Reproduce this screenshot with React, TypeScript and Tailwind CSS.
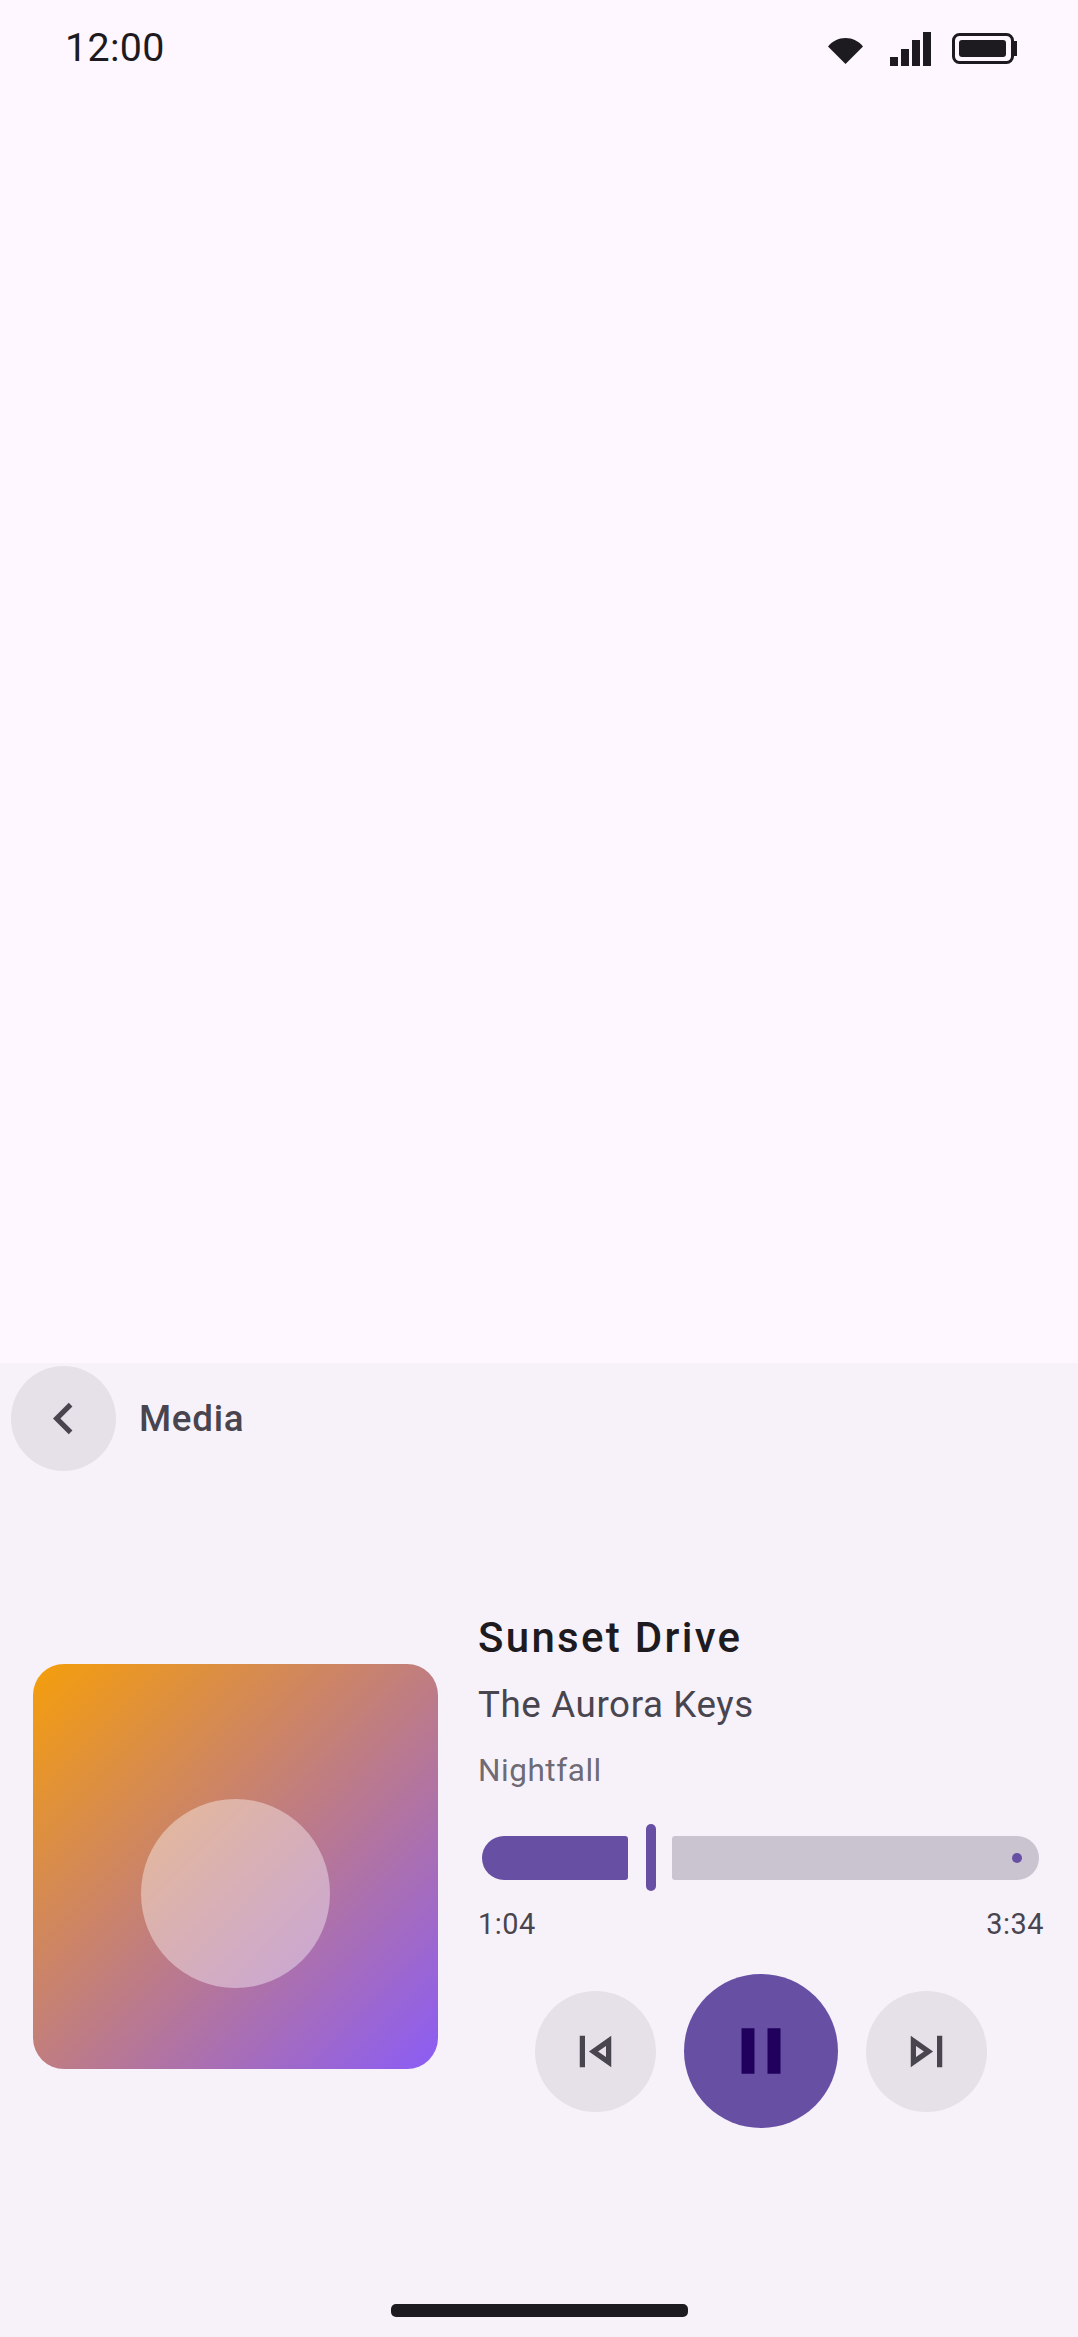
function StatusBar() {
  return (
    <div className="flex items-center justify-between pl-[65px] pr-[61px] pt-[28px]">
      <span className="text-[39.4px] leading-[40px] tracking-[0.3px] text-[#1d1b20]">12:00</span>
      <div className="flex items-center pt-[1px]">
        {/* wifi */}
        <svg width="35" height="26" viewBox="0 0 35 26" className="mt-[5px]">
          <path d="M0 8.5C4.5 3 10.5 0 17.5 0S30.5 3 35 8.5L17.5 26z" fill="#1d1b20" />
        </svg>
        {/* signal */}
        <svg width="41" height="34" viewBox="0 0 41 34" className="ml-[27px]">
          <rect x="0" y="25" width="8" height="9" fill="#1d1b20" />
          <rect x="11" y="17" width="8" height="17" fill="#1d1b20" />
          <rect x="22" y="8" width="8" height="26" fill="#1d1b20" />
          <rect x="33" y="0" width="8" height="34" fill="#1d1b20" />
        </svg>
        {/* battery */}
        <svg width="65" height="31" viewBox="0 0 65 31" className="ml-[21px]">
          <rect x="1.5" y="1.5" width="59" height="28" rx="6" fill="none" stroke="#1d1b20" strokeWidth="3" />
          <rect x="7" y="7" width="47" height="17" rx="3" fill="#1d1b20" />
          <rect x="62" y="8" width="3" height="15" fill="#1d1b20" />
        </svg>
      </div>
    </div>
  );
}

function SeekBar() {
  return (
    <div className="flex items-center h-[67px] pl-[4px] pr-[5px]">
      <div className="w-[146px] h-[44px] bg-[#6750a4] rounded-l-[22px] rounded-r-[3px]" />
      <div className="w-[10px] h-[67px] ml-[18px] bg-[#6750a4] rounded-full" />
      <div className="flex-1 flex items-center justify-end h-[44px] ml-[16px] pr-[17px] bg-[#cac4d0] rounded-r-[22px] rounded-l-[3px]">
        <div className="w-[10px] h-[10px] bg-[#6750a4] rounded-full" />
      </div>
    </div>
  );
}

function Controls() {
  return (
    <div className="flex items-center justify-center gap-[28px] mt-[31px]">
      <button className="flex items-center justify-center w-[121px] h-[121px] rounded-full bg-[#e6e0e9]">
        <svg width="63" height="63" viewBox="0 0 24 24" fill="#49454f">
          <path d="M6 6h2v12H6zm12 12V6l-8.5 6zM16 14.14 12.97 12 16 9.86z" />
        </svg>
      </button>
      <button className="flex items-center justify-center w-[154px] h-[154px] rounded-full bg-[#6750a4]">
        <svg width="78" height="78" viewBox="0 0 24 24" fill="#21005d">
          <path d="M6 19h4V5H6v14zm8-14v14h4V5h-4z" />
        </svg>
      </button>
      <button className="flex items-center justify-center w-[121px] h-[121px] rounded-full bg-[#e6e0e9]">
        <svg width="63" height="63" viewBox="0 0 24 24" fill="#49454f">
          <path d="M6 18l8.5-6L6 6v12zm2-8.14L11.03 12 8 14.14V9.86zM16 6h2v12h-2z" />
        </svg>
      </button>
    </div>
  );
}

export default function App() {
  return (
    <div className="flex flex-col w-[1078px] h-[2337px] overflow-hidden bg-[#fef7ff] font-['Roboto',sans-serif]">
      <div className="h-[1363px] shrink-0">
        <StatusBar />
      </div>

      <div className="flex-1 flex flex-col bg-[#f7f2fa]">
        {/* header */}
        <div className="flex items-center gap-[23px] pl-[11px] pt-[3px]">
          <button className="flex items-center justify-center w-[105px] h-[105px] rounded-full bg-[#e6e0e9]">
            <svg width="63" height="63" viewBox="0 0 24 24" fill="#49454f">
              <path d="M15.41 7.41 14 6l-6 6 6 6 1.41-1.41L10.83 12z" />
            </svg>
          </button>
          <span className="text-[36.75px] leading-[48px] font-medium tracking-[0.7px] text-[#49454f]">Media</span>
        </div>

        {/* player */}
        <div className="flex items-center pl-[33px] pr-[34px] mt-[139px]">
          <div className="flex items-center justify-center w-[405px] h-[405px] mb-[6px] shrink-0 rounded-[31px] bg-[linear-gradient(135deg,#f59e0b,#8b5cf6)]">
            {/* disc sits below the centre of the cover */}
            <div className="w-[189px] h-[189px] mt-[54px] rounded-full bg-white/40" />
          </div>

          <div className="flex-1 ml-[40px]">
            <div className="text-[42px] leading-[55px] font-medium tracking-[2.3px] text-[#1d1b20]">Sunset Drive</div>
            <div className="text-[36.75px] leading-[48px] mt-[16px] tracking-[0.6px] text-[#49454f]">The Aurora Keys</div>
            <div className="text-[31.5px] leading-[42px] mt-[21px] tracking-[0.55px] text-[#49454f]/80">Nightfall</div>
            <div className="mt-[32px]">
              <SeekBar />
            </div>
            <div className="flex justify-between text-[28.9px] leading-[38px] mt-[14px] tracking-[0.5px] text-[#49454f]">
              <span>1:04</span>
              <span>3:34</span>
            </div>
            <Controls />
          </div>
        </div>

        {/* gesture bar */}
        <div className="flex justify-center mt-auto pb-[20px]">
          <div className="w-[297px] h-[13px] rounded-[5px] bg-[#1d1b20]" />
        </div>
      </div>
    </div>
  );
}
